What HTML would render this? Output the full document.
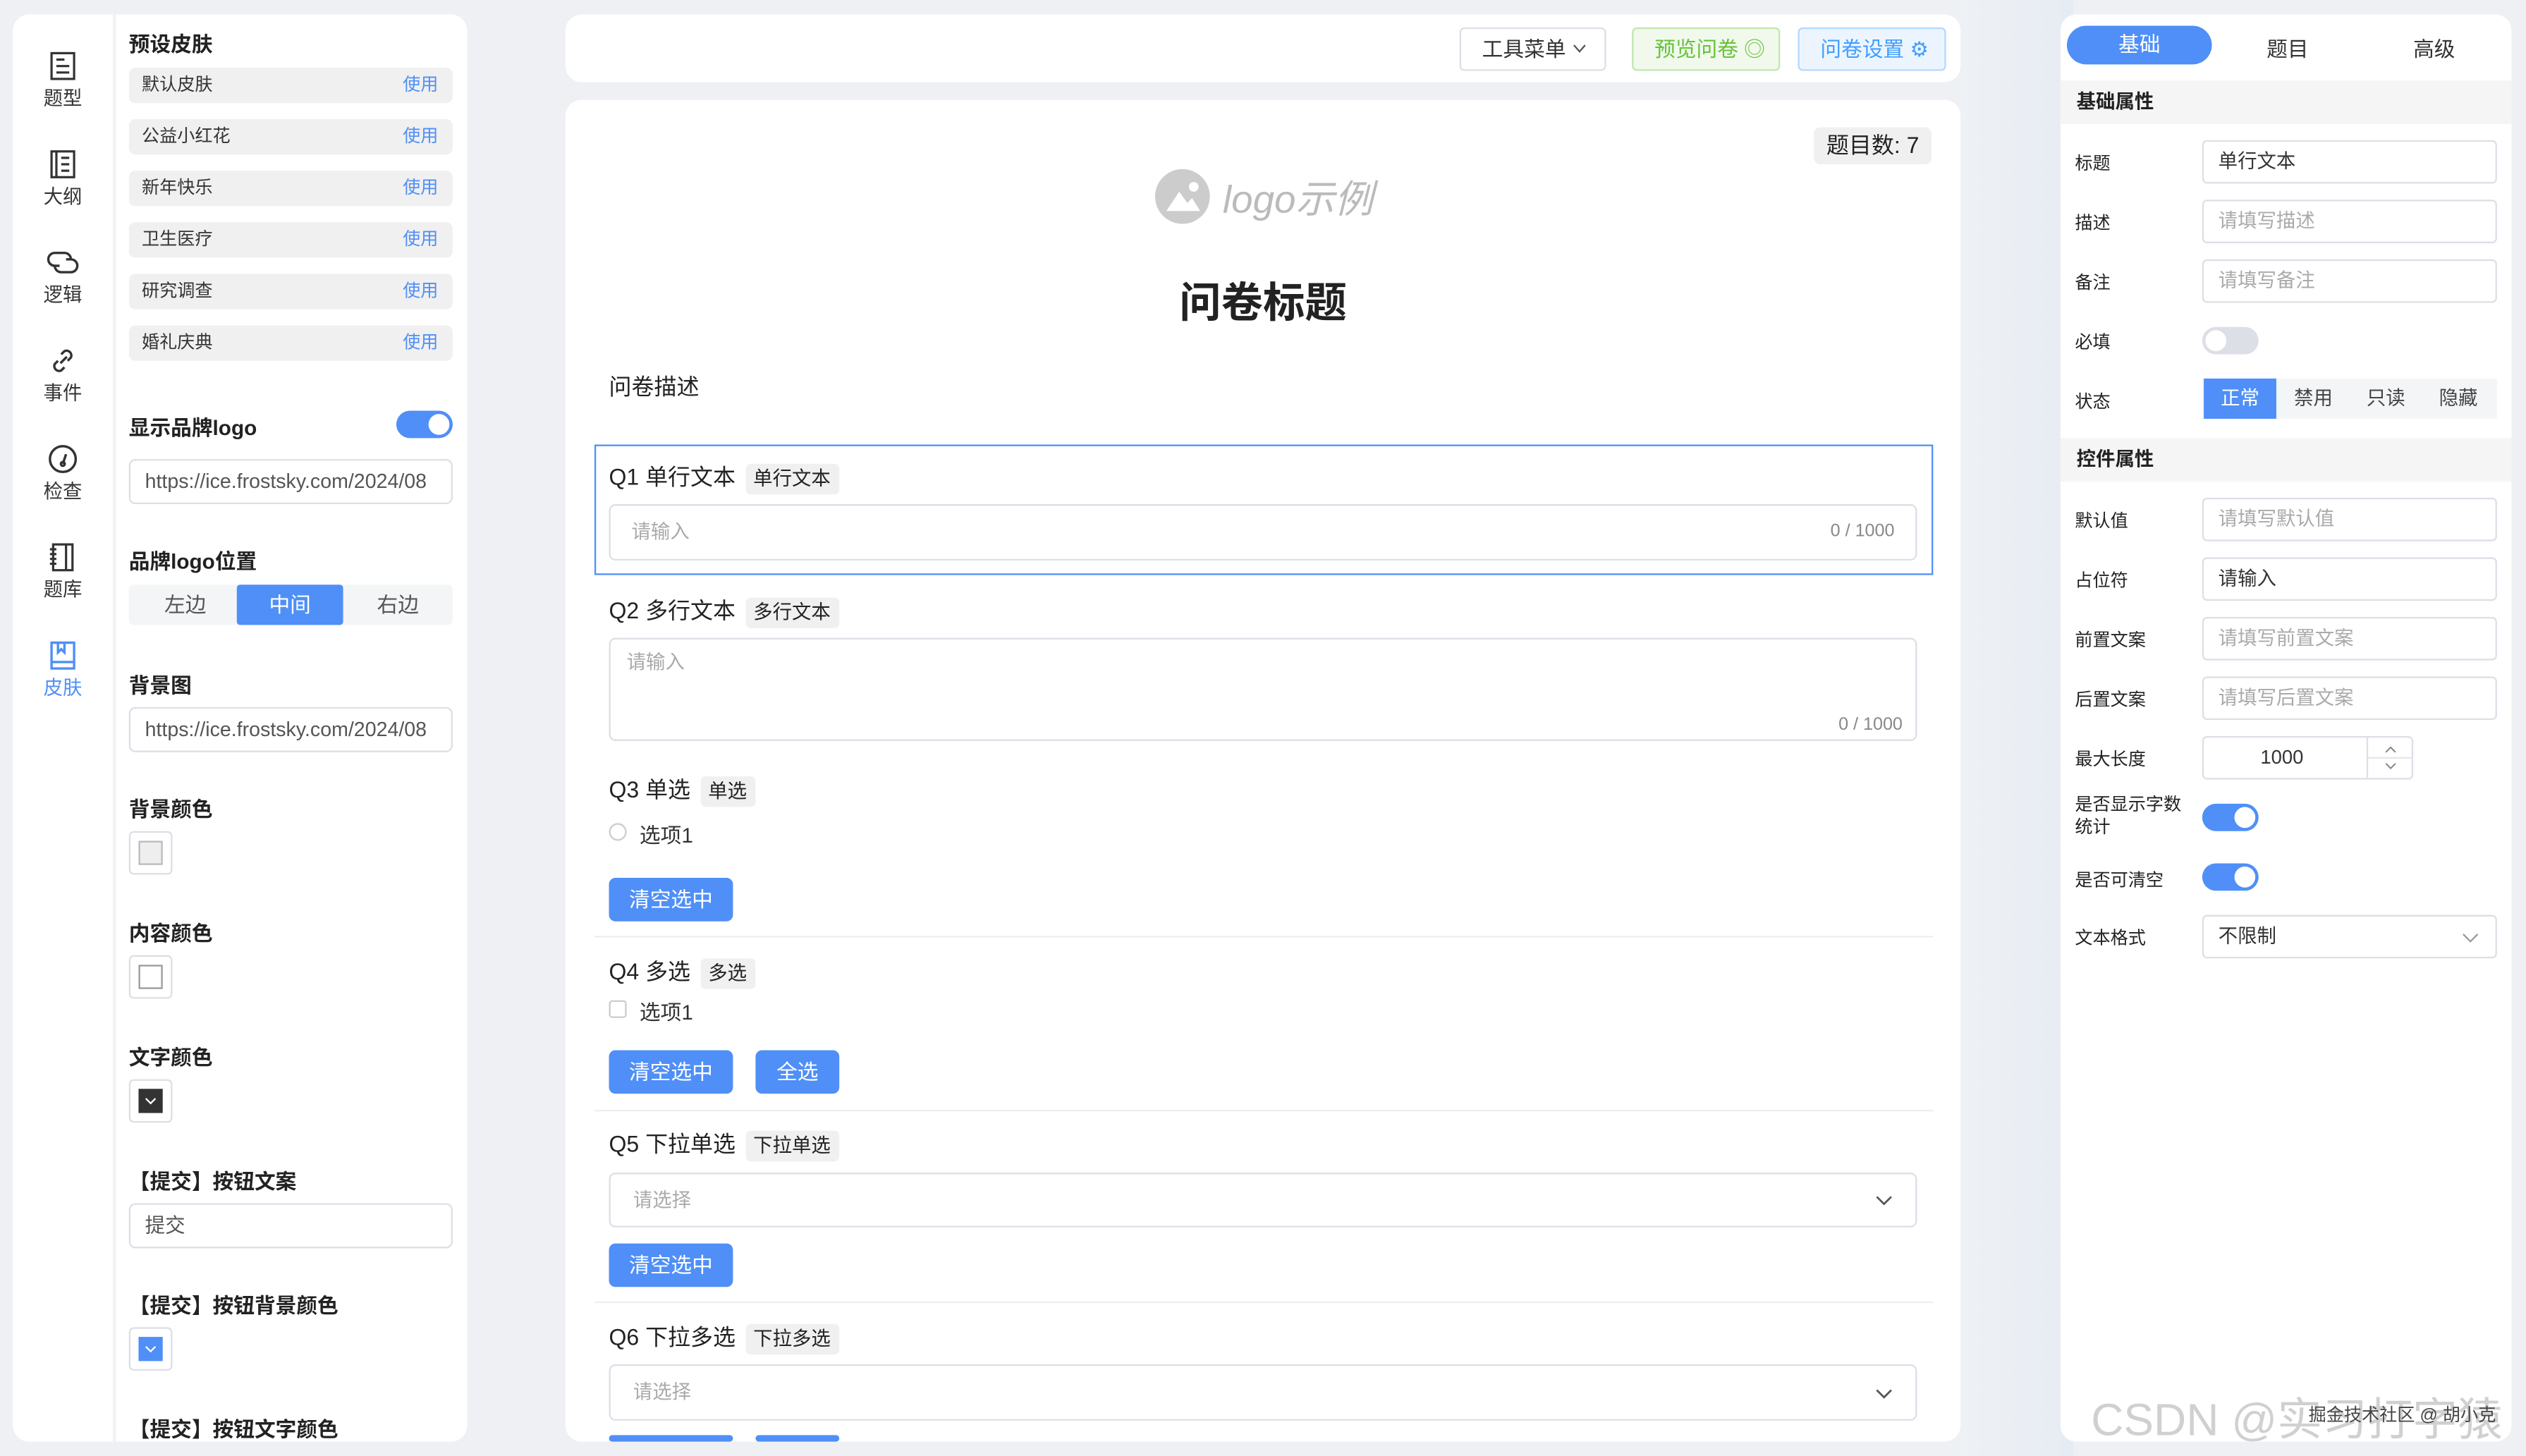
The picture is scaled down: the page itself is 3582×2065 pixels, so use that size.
<!DOCTYPE html>
<html><head><meta charset="utf-8">
<style>
*{box-sizing:border-box;margin:0;padding:0}
html,body{width:3582px;height:2064px;overflow:hidden;background:#eef1f5}
#w{position:absolute;left:0;top:0;width:1568px;height:904px;transform:scale(2.28444);transform-origin:0 0;font-family:"Liberation Sans","Noto Sans CJK SC",sans-serif;color:#333;background:#eef0f3}
.a{position:absolute}
.card{position:absolute;background:#fff;border-radius:10px}
.lbl{position:absolute;font-size:13px;font-weight:bold;color:#222}
.skin{position:absolute;left:80px;width:201px;height:22px;background:#f0f0f0;border-radius:4px;font-size:11px;line-height:22px;padding-left:8px;color:#333}
.skin span{position:absolute;right:9px;color:#4f8ff7}
.inp{position:absolute;border:1px solid #dcdfe6;border-radius:4px;background:#fff;font-size:12px;color:#555;padding-left:9px;white-space:nowrap;overflow:hidden}
.ph{color:#aaa}
.cb{position:absolute;width:27px;height:27px;border:1px solid #dcdfe6;border-radius:3px;background:#fff}
.nav{position:absolute;left:8px;width:62px;text-align:center;font-size:12px;color:#333}
.nav svg{display:block;margin:0 auto 2px}
.q{position:absolute;left:378px;font-size:14px;color:#222}
.tag{display:inline-block;background:#f0f0f0;font-size:12px;padding:0 5px;line-height:19px;border-radius:3px;margin-left:6px}
.btn{position:absolute;height:27px;background:#4f8ff7;color:#fff;font-size:13px;line-height:27px;text-align:center;border-radius:4px}
.hr{position:absolute;left:369px;width:831px;height:1px;background:#eee}
.rl{position:absolute;left:1288px;font-size:11px;color:#222}
.ri{position:absolute;left:1367px;width:183px;height:27px;border:1px solid #dcdfe6;border-radius:3px;font-size:12px;line-height:25px;padding-left:9px;color:#333}
.sec{position:absolute;left:1279px;width:280px;height:27px;background:#f5f5f6;font-size:12px;font-weight:bold;line-height:27px;padding-left:10px;color:#222}
.tg{position:absolute;width:35px;height:17px;border-radius:9px;background:#4f8ff7}
.tg i{position:absolute;right:2px;top:2px;width:13px;height:13px;border-radius:50%;background:#fff}
.chev{position:absolute;top:50%;margin-top:-3px}
</style></head><body><div id="w">
<div class="a" style="left:1217px;top:0;width:70px;height:904px;background:linear-gradient(90deg,#eef1f5,#e6ecf3)"></div>

<div class="card" style="left:8px;top:9px;width:282px;height:886px"></div>
<div class="a" style="left:70px;top:9px;width:2px;height:886px;background:#f2f2f2"></div>

<div class="nav" style="top:32px"><svg width="16" height="18" viewBox="0 0 16 18" fill="none" stroke="#333" stroke-width="1.4"><rect x="1" y="1" width="14" height="16"/><path d="M4 5h5M4 9h8M4 13h8"/></svg>题型</div>
<div class="nav" style="top:93px"><svg width="16" height="18" viewBox="0 0 16 18" fill="none" stroke="#333" stroke-width="1.4"><rect x="1" y="1" width="14" height="16"/><path d="M4 1v16M7 5h5M7 9h5M7 13h5"/></svg>大纲</div>
<div class="nav" style="top:154px"><svg width="20" height="18" viewBox="0 0 20 18" fill="none" stroke="#333" stroke-width="1.5"><path d="M8 11H5a4 4 0 010-8h6a4 4 0 014 4M12 7h3a4 4 0 010 8H9a4 4 0 01-4-4"/></svg>逻辑</div>
<div class="nav" style="top:215px"><svg width="18" height="18" viewBox="0 0 18 18" fill="none" stroke="#333" stroke-width="1.5"><path d="M7.5 10.5l4-4M8 5l2-2a3 3 0 014 4l-2 2M10 13l-2 2a3 3 0 01-4-4l2-2"/></svg>事件</div>
<div class="nav" style="top:276px"><svg width="20" height="18" viewBox="0 0 20 18" fill="none" stroke="#333" stroke-width="1.5"><circle cx="10" cy="9" r="8"/><path d="M10 12l2-6"/><circle cx="10" cy="12" r="1.2"/></svg>检查</div>
<div class="nav" style="top:337px"><svg width="18" height="18" viewBox="0 0 18 18" fill="none" stroke="#333" stroke-width="1.4"><rect x="3" y="1" width="12" height="16"/><path d="M11 1v16M1 4h4M1 7h4M1 10h4M1 13h4"/></svg>题库</div>
<div class="nav" style="top:398px;color:#4f8ff7"><svg width="18" height="18" viewBox="0 0 18 18" fill="none" stroke="#4f8ff7" stroke-width="1.5"><path d="M2 1h14v16H2zM2 13h14M6 1v6l2-2 2 2V1"/></svg>皮肤</div>

<div class="lbl" style="left:80px;top:17px">预设皮肤</div>
<div class="skin" style="top:42px">默认皮肤<span>使用</span></div>
<div class="skin" style="top:74px">公益小红花<span>使用</span></div>
<div class="skin" style="top:106px">新年快乐<span>使用</span></div>
<div class="skin" style="top:138px">卫生医疗<span>使用</span></div>
<div class="skin" style="top:170px">研究调查<span>使用</span></div>
<div class="skin" style="top:202px">婚礼庆典<span>使用</span></div>

<div class="lbl" style="left:80px;top:255px">显示品牌logo</div>
<div class="tg" style="left:246px;top:255px"><i></i></div>
<div class="inp" style="left:80px;top:285px;width:201px;height:28px;line-height:26px;font-size:12.5px">https://ice.frostsky.com/2024/08</div>
<div class="lbl" style="left:80px;top:338px">品牌logo位置</div>
<div class="a" style="left:80px;top:363px;width:201px;height:25px;background:#f4f5f7;border-radius:3px;font-size:13px;line-height:25px;color:#555">
<span class="a" style="left:22px">左边</span>
<span class="a" style="left:67px;width:66px;height:25px;background:#4f8ff7;color:#fff;text-align:center;border-radius:2px">中间</span>
<span class="a" style="left:154px">右边</span></div>
<div class="lbl" style="left:80px;top:415px">背景图</div>
<div class="inp" style="left:80px;top:439px;width:201px;height:28px;line-height:26px;font-size:12.5px">https://ice.frostsky.com/2024/08</div>
<div class="lbl" style="left:80px;top:492px">背景颜色</div>
<div class="cb" style="left:80px;top:516px"><div class="a" style="left:5px;top:5px;width:15px;height:15px;background:#eee;border:1px solid #bbb"></div></div>
<div class="lbl" style="left:80px;top:569px">内容颜色</div>
<div class="cb" style="left:80px;top:593px"><div class="a" style="left:5px;top:5px;width:15px;height:15px;background:#fff;border:1px solid #999"></div></div>
<div class="lbl" style="left:80px;top:646px">文字颜色</div>
<div class="cb" style="left:80px;top:670px"><div class="a" style="left:5px;top:5px;width:15px;height:15px;background:#333"><svg width="15" height="15"><path d="M4.5 6l3 3 3-3" fill="none" stroke="#fff" stroke-width="1"/></svg></div></div>
<div class="lbl" style="left:80px;top:723px">【提交】按钮文案</div>
<div class="inp" style="left:80px;top:747px;width:201px;height:28px;line-height:26px;font-size:12.5px">提交</div>
<div class="lbl" style="left:80px;top:800px">【提交】按钮背景颜色</div>
<div class="cb" style="left:80px;top:824px"><div class="a" style="left:5px;top:5px;width:15px;height:15px;background:#4f8ff7"><svg width="15" height="15"><path d="M4.5 6l3 3 3-3" fill="none" stroke="#fff" stroke-width="1"/></svg></div></div>
<div class="lbl" style="left:80px;top:877px">【提交】按钮文字颜色</div>

<div class="card" style="left:351px;top:9px;width:866px;height:42px"></div>
<div class="a" style="left:906px;top:17px;width:91px;height:27px;border:1px solid #dcdfe6;border-radius:3px;font-size:13px;line-height:25px;padding-left:13px">工具菜单 <svg width="9" height="6" style="vertical-align:2px"><path d="M1 1l3.5 4L8 1" fill="none" stroke="#555"/></svg></div>
<div class="a" style="left:1013px;top:17px;width:92px;height:27px;border:1px solid #c2e7b0;background:#f0f9eb;color:#67c23a;border-radius:3px;font-size:13px;line-height:25px;padding-left:13px">预览问卷 ◎</div>
<div class="a" style="left:1116px;top:17px;width:92px;height:27px;border:1px solid #b3d8ff;background:#ecf5ff;color:#409eff;border-radius:3px;font-size:13px;line-height:25px;padding-left:13px">问卷设置 ⚙</div>

<div class="card" style="left:351px;top:62px;width:866px;height:833px"></div>
<div class="a" style="left:1126px;top:79px;width:73px;height:23px;background:#f0f0f0;border-radius:4px;font-size:14px;line-height:23px;text-align:center;color:#222">题目数: 7</div>
<div class="a" style="left:717px;top:105px;width:34px;height:34px;border-radius:50%;background:#ccc"><svg width="34" height="34" viewBox="0 0 34 34"><path d="M7 26l8-12 5 7 3-3 5 8z" fill="#fff"/><circle cx="24" cy="11" r="3" fill="#fff"/></svg></div>
<div class="a" style="left:759px;top:104px;font-size:24px;font-style:italic;color:#bbb">logo示例</div>
<span class="a" style="left:732px;top:168px;font-size:26px;font-weight:bold;color:#222">问卷标题</span>
<div class="a" style="left:378px;top:230px;font-size:14px;color:#222">问卷描述</div>

<div class="a" style="left:369px;top:276px;width:831px;height:81px;border:1.5px solid #4f8ff7"></div>
<div class="q" style="top:286px">Q1 单行文本<span class="tag">单行文本</span></div>
<div class="inp" style="left:378px;top:313px;width:812px;height:35px;line-height:33px;padding-left:13px"><span class="ph">请输入</span><span class="a" style="right:13px;font-size:11px;color:#888">0 / 1000</span></div>

<div class="q" style="top:369px">Q2 多行文本<span class="tag">多行文本</span></div>
<div class="inp" style="left:378px;top:396px;width:812px;height:64px;padding:5px 10px"><span class="ph">请输入</span><span class="a" style="right:8px;bottom:3px;font-size:11px;color:#888">0 / 1000</span></div>

<div class="q" style="top:480px">Q3 单选<span class="tag">单选</span></div>
<div class="a" style="left:378px;top:511px;width:11px;height:11px;border:1px solid #ccc;border-radius:50%"></div>
<div class="a" style="left:397px;top:508px;font-size:13px">选项1</div>
<div class="btn" style="left:378px;top:545px;width:77px">清空选中</div>
<div class="hr" style="top:581px"></div>

<div class="q" style="top:593px">Q4 多选<span class="tag">多选</span></div>
<div class="a" style="left:378px;top:621px;width:11px;height:11px;border:1px solid #ccc;border-radius:2px"></div>
<div class="a" style="left:397px;top:618px;font-size:13px">选项1</div>
<div class="btn" style="left:378px;top:652px;width:77px">清空选中</div>
<div class="btn" style="left:469px;top:652px;width:52px">全选</div>
<div class="hr" style="top:689px"></div>

<div class="q" style="top:700px">Q5 下拉单选<span class="tag">下拉单选</span></div>
<div class="inp" style="left:378px;top:728px;width:812px;height:34px;line-height:32px;padding-left:14px"><span class="ph">请选择</span><svg class="chev" style="right:14px" width="11" height="7"><path d="M1 1l4.5 4.5L10 1" fill="none" stroke="#555" stroke-width="1.2"/></svg></div>
<div class="btn" style="left:378px;top:772px;width:77px">清空选中</div>
<div class="hr" style="top:808px"></div>

<div class="q" style="top:820px">Q6 下拉多选<span class="tag">下拉多选</span></div>
<div class="inp" style="left:378px;top:847px;width:812px;height:35px;line-height:33px;padding-left:14px"><span class="ph">请选择</span><svg class="chev" style="right:14px" width="11" height="7"><path d="M1 1l4.5 4.5L10 1" fill="none" stroke="#555" stroke-width="1.2"/></svg></div>
<div class="btn" style="left:378px;top:891px;width:77px;height:4px"></div>
<div class="btn" style="left:469px;top:891px;width:52px;height:4px"></div>

<div class="card" style="left:1279px;top:9px;width:280px;height:886px"></div>
<div class="a" style="left:1283px;top:16px;width:90px;height:24px;border-radius:12px;background:#4f8ff7;color:#fff;font-size:13px;line-height:24px;text-align:center">基础</div>
<div class="a" style="left:1407px;top:20px;font-size:13px;color:#333">题目</div>
<div class="a" style="left:1498px;top:20px;font-size:13px;color:#333">高级</div>
<div class="sec" style="top:50px">基础属性</div>
<div class="rl" style="top:93px">标题</div><div class="ri" style="top:87px">单行文本</div>
<div class="rl" style="top:130px">描述</div><div class="ri" style="top:124px;color:#aaa">请填写描述</div>
<div class="rl" style="top:167px">备注</div><div class="ri" style="top:161px;color:#aaa">请填写备注</div>
<div class="rl" style="top:204px">必填</div>
<div class="tg" style="left:1367px;top:203px;background:#dcdfe6"><i style="left:2px;right:auto"></i></div>
<div class="rl" style="top:241px">状态</div>
<div class="a" style="left:1367px;top:235px;width:183px;height:25px;background:#f4f5f7;font-size:12px;line-height:25px;color:#444">
<span class="a" style="left:1px;width:45px;height:25px;background:#4f8ff7;color:#fff;text-align:center">正常</span>
<span class="a" style="left:57px">禁用</span><span class="a" style="left:102px">只读</span><span class="a" style="left:147px">隐藏</span></div>
<div class="sec" style="top:272px">控件属性</div>
<div class="rl" style="top:315px">默认值</div><div class="ri" style="top:309px;color:#aaa">请填写默认值</div>
<div class="rl" style="top:352px">占位符</div><div class="ri" style="top:346px">请输入</div>
<div class="rl" style="top:389px">前置文案</div><div class="ri" style="top:383px;color:#aaa">请填写前置文案</div>
<div class="rl" style="top:426px">后置文案</div><div class="ri" style="top:420px;color:#aaa">请填写后置文案</div>
<div class="rl" style="top:463px">最大长度</div>
<div class="ri" style="top:457px;width:131px;text-align:center;padding:0 32px 0 0">1000<span class="a" style="right:0;top:0;width:28px;height:25px;border-left:1px solid #dcdfe6"><svg width="28" height="25"><path d="M11 9l3-3 3 3M11 16l3 3 3-3" fill="none" stroke="#888" stroke-width="0.9"/><path d="M0 12.5h28" stroke="#e4e7ed"/></svg></span></div>
<div class="rl" style="top:493px;line-height:14px">是否显示字数<br>统计</div>
<div class="tg" style="left:1367px;top:499px"><i></i></div>
<div class="rl" style="top:538px">是否可清空</div>
<div class="tg" style="left:1367px;top:536px"><i></i></div>
<div class="rl" style="top:574px">文本格式</div>
<div class="ri" style="top:568px">不限制<svg class="chev" style="right:10px" width="11" height="7"><path d="M1 1l4.5 4.5L10 1" fill="none" stroke="#999" stroke-width="1"/></svg></div>

<div class="a" style="left:1298px;top:860px;font-size:28px;color:rgba(150,150,150,0.45)">CSDN @实习打字猿</div>
<div class="a" style="left:1433px;top:870px;font-size:11px;color:#444">掘金技术社区 @ 胡小克</div>
</div></body></html>
